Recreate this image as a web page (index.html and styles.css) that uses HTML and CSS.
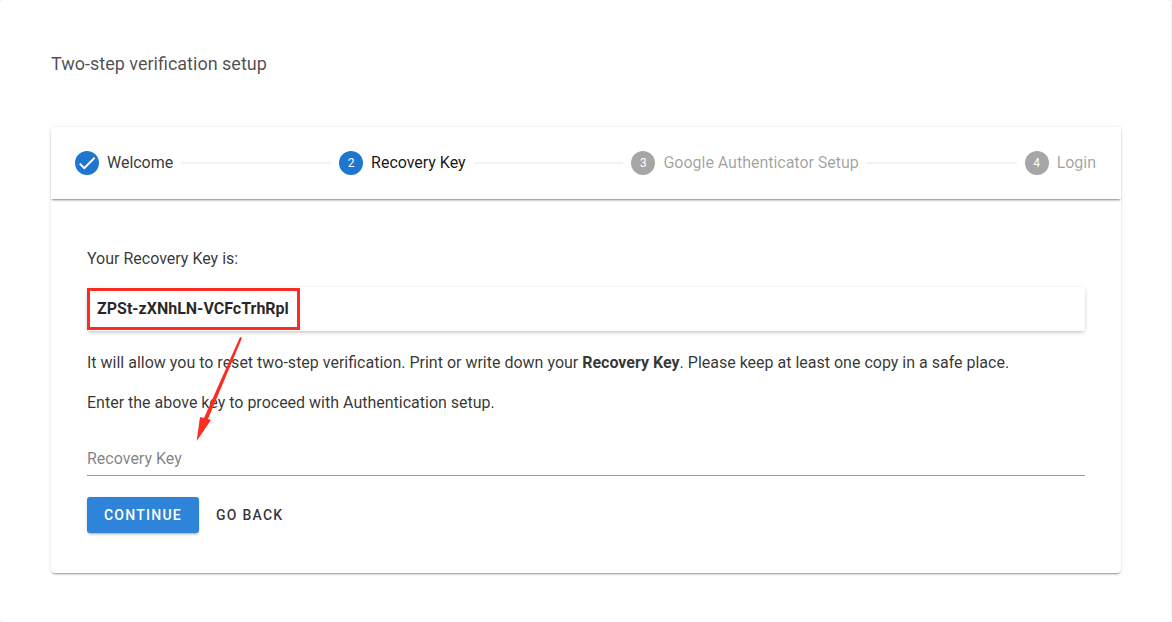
FILE: index.html
```html
<!DOCTYPE html>
<html lang="en">
<head>
<meta charset="utf-8">
<title>Two-step verification setup</title>
<link rel="stylesheet" href="styles.css">
</head>
<body>
<main class="frame">
  <h1 class="title">Two-step verification setup</h1>
  <section class="card">
    <header class="stepper">
      <div class="step">
        <span class="dot"><svg class="check" viewBox="0 0 24 24" width="22" height="22"><path d="M9 16.17 4.83 12l-1.42 1.41L9 19 21 7l-1.41-1.41z" fill="#fff"/></svg></span>
        <span class="label">Welcome</span>
      </div>
      <div class="line line-1"></div>
      <div class="step">
        <span class="dot">2</span>
        <span class="label label-active">Recovery Key</span>
      </div>
      <div class="line line-2"></div>
      <div class="step step-off">
        <span class="dot">3</span>
        <span class="label">Google Authenticator Setup</span>
      </div>
      <div class="line line-3"></div>
      <div class="step step-off">
        <span class="dot">4</span>
        <span class="label">Login</span>
      </div>
    </header>
    <div class="body">
      <p class="intro">Your Recovery Key is:</p>
      <div class="keybox"><span class="keytext">ZPSt-zXNhLN-VCFcTrhRpl</span></div>
      <p class="para">It will allow you to reset two-step verification. Print or write down your <strong>Recovery Key</strong>. Please keep at least one copy in a safe place.</p>
      <p class="para para-2">Enter the above key to proceed with Authentication setup.</p>
      <div class="field">Recovery Key</div>
      <div class="actions">
        <button class="btn btn-primary" type="button">Continue</button>
        <button class="btn btn-text" type="button">Go Back</button>
      </div>
    </div>
  </section>
  <div class="mark-rect"></div>
  <svg class="mark-arrow" width="60" height="120" viewBox="0 0 60 120"><path d="M56 2 54 1 18 82 14 81 10.7 105 25 84 22 83z" fill="#fb2c22"/></svg>
</main>
</body>
</html>
```
FILE: styles.css
```css
* { box-sizing: border-box; }
html, body { margin: 0; height: 100%; background: #fff; }
body {
  font-family: Roboto, "Liberation Sans", sans-serif;
  color: rgba(0, 0, 0, .87);
  overflow: hidden;
}
.frame {
  position: relative;
  width: 1171px;
  height: 622px;
  padding: 53px 50px 0 51px;
  border-radius: 4px;
  box-shadow: 0 0 2px rgba(0, 0, 0, .2);
  background: #fff;
}
.title {
  margin: 0 0 53px;
  font-size: 18px;
  font-weight: 400;
  line-height: 21px;
  color: rgba(0, 0, 0, .7);
}
.card {
  width: 1070px;
  height: 446px;
  background: #fff;
  border-radius: 4px;
  box-shadow: 0 2px 2px -1px rgba(0, 0, 0, .4), 0 0 4px rgba(0, 0, 0, .1);
}
.stepper {
  display: flex;
  align-items: center;
  height: 72px;
  padding: 0 25px 0 24px;
  box-shadow: 0 2px 2px -1px rgba(0, 0, 0, .5);
}
.step { display: flex; align-items: center; flex: none; }
.dot {
  display: flex;
  align-items: center;
  justify-content: center;
  width: 24px;
  height: 24px;
  margin-right: 8px;
  border-radius: 50%;
  background: #1f76ce;
  color: #fff;
  font-size: 12px;
}
.step-off .dot { background: #a6a6a6; }
.label {
  margin-top: -1px;
  font-size: 16px;
  letter-spacing: -.02px;
  color: rgba(0, 0, 0, .8);
}
.label-active { color: rgba(0, 0, 0, .92); }
.step-off .label { color: rgba(0, 0, 0, .38); }
.line {
  flex: 1;
  height: 2px;
  margin: 0 8px;
  background: #f2f2f2;
}
.body { padding: 50px 36px 0; }
.intro, .para {
  margin: 0;
  font-size: 16px;
  line-height: 20px;
  color: rgba(0, 0, 0, .8);
}
.keybox {
  display: flex;
  align-items: center;
  width: 998px;
  height: 44px;
  margin: 18px 0 22px;
  padding: 0 10px;
  font-size: 16px;
  font-weight: 700;
  color: rgba(0, 0, 0, .85);
  border-radius: 2px;
  box-shadow: 0 2px 4px -1px rgba(0, 0, 0, .25), 0 0 3px rgba(0, 0, 0, .06);
}
.keytext { margin-top: -2px; }
.para strong { font-weight: 700; }
.para-2 { margin-top: 20px; }
.field {
  width: 998px;
  height: 36px;
  margin-top: 27px;
  padding-top: 9px;
  font-size: 16px;
  line-height: 20px;
  color: rgba(0, 0, 0, .5);
  border-bottom: 1px solid #9a9a9a;
}
.actions { display: flex; align-items: center; margin-top: 21px; }
.btn {
  height: 36px;
  padding: 0 17px;
  border: 0;
  border-radius: 3px;
  font-family: inherit;
  font-size: 14px;
  font-weight: 500;
  letter-spacing: 1.25px;
  text-transform: uppercase;
  background: transparent;
}
.btn-primary {
  width: 112px;
  padding: 0;
  background: #2d84d8;
  color: #fff;
  box-shadow: 0 2px 3px -1px rgba(0, 0, 0, .35), 0 0 2px rgba(0, 0, 0, .1);
}
.btn-text { color: rgba(0, 0, 0, .8); }
.mark-rect {
  position: absolute;
  left: 87px;
  top: 288px;
  width: 213px;
  height: 42px;
  border: 3px solid #fb2c22;
}
.mark-arrow {
  position: absolute;
  left: 186px;
  top: 336px;
}
```
